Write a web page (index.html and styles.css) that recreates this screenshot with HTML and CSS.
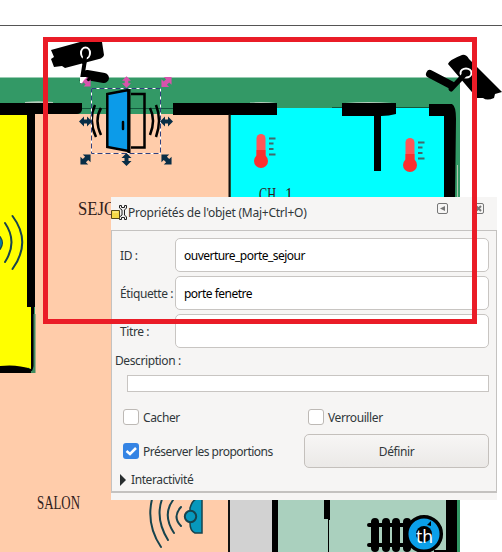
FILE: index.html
```
<!DOCTYPE html>
<html lang="fr">
<head>
<meta charset="utf-8">
<title>Propriétés de l'objet</title>
<link rel="stylesheet" href="styles.css">
</head>
<body>
<main class="workspace">
<svg class="plan" viewBox="0 0 502 552" width="502" height="552">
  <defs>
    <path id="arrow" d="M-6.5 0L-1.5-5V-2H1.5V-5L6.5 0L1.5 5V2H-1.5V5Z"/>
    <g id="thermo">
      <rect x="-4.5" y="-17" width="9" height="27" rx="4.5" fill="#ff5558"/>
      <path d="M-4.5-1H4.5V7H-4.5Z" fill="#fb302f"/>
      <circle cy="10" r="7" fill="#fb302f"/>
      <path d="M8-12.500H14.500M8-7.500H12.500M8-2H12.500M8 3.500H14.500" stroke="#42696b" stroke-width="2"/>
    </g>
  </defs>
  <path d="M0 25.500H502" stroke="#555"/>
  <path d="M0 77.500H460V552H0Z" fill="#339966"/>
  <path d="M0 115H28V373H0Z" fill="#ff0"/>
  <path d="M35 114H229V552H0V373H35Z" fill="#ffccaa"/>
  <path d="M231 108H444V198H231Z" fill="#0ff"/>
  <path d="M230 499H272V552H230Z" fill="#d2d2d2"/>
  <path d="M278 499H447V552H278Z" fill="#aad0be"/>
  <path d="M82 108.500H174M332 107.500H430" stroke="#12583c"/>
  <path d="M25 102Q38 100.500 53 102V103H25ZM250 102.500Q265 101.500 276 103V104H250ZM345 103Q368 101 392 103V104H345Z" fill="#b4cbbb"/>
  <path d="M0 103H82V110Q81 114 77 114H35V307H27V115H0ZM173 103H277V115H173Z"/>
  <path d="M342 103H396V114Q389 116 381 116V171H374V116H342Z"/>
  <path d="M429 104H452Q456 106 456 119L455 198H444V116H429Z"/>
  <path d="M229.500 114V198M229 499V552" fill="none" stroke="#111" stroke-width="2"/>
  <path d="M27 305H34V366L32 371H30V369Q18 366 0 367V373H31V307H27Z"/>
  <path d="M0 366Q17 364 31 369V373H0Z"/>
  <path d="M27 307H31V369L27 367Z" fill="#ff0"/>
  <path d="M34.500 314V372H31" fill="none" stroke="#438c61" stroke-width="2"/>
  <path d="M272 499H278V552H272ZM324 499H330V520H329V552H328V519H324ZM446 499H457V552H434V550H446Z"/>
  <path d="M457.500 165V198" stroke="#b1c7ae"/>
  <g fill="none" stroke="#17434d" stroke-width="2" stroke-linecap="round">
    <path d="M0 237Q4 243 0 249M5 223Q18 242 5 262M12.500 216Q32 242 12.500 269"/>
    <path d="M181 507Q172 517 181 526M173 500Q162 515 174 533M162 499Q155 519 168 540M152 499Q146 525 161 547"/>
  </g>
  <path d="M0 238Q4 242 0 248Z" fill="#087da0"/>
  <path d="M202 499V533H195Q190 531 190 523V508Q192 501 196 499Z" fill="#0798bd" stroke="#17434d" stroke-width="1.500"/>
  <circle cx="190.500" cy="516.500" r="5.700" fill="#0798bd" stroke="#17434d" stroke-width="2"/>
  <g class="room">
    <text x="78" y="215" textLength="38" lengthAdjust="spacingAndGlyphs">SEJO</text>
    <text x="37" y="509" textLength="43" lengthAdjust="spacingAndGlyphs">SALON</text>
    <text x="259" y="201" textLength="17" lengthAdjust="spacingAndGlyphs">CH</text>
    <text x="285" y="201" textLength="8" lengthAdjust="spacingAndGlyphs">1</text>
  </g>
  <use href="#thermo" x="261" y="151"/>
  <use href="#thermo" x="410" y="155"/>

  <g>
    <path d="M51 50L80 42H102L104 55Q103 58 99 59L65 68L62 66L54 67L51 59L54 57Z"/>
    <path d="M85 60L82 79H95" fill="none" stroke="#000" stroke-width="4"/>
    <path d="M87 75L104 78" stroke="#000" stroke-width="10" stroke-linecap="round"/>
    <ellipse cx="85.500" cy="53" rx="4.500" ry="5.500" fill="#000" stroke="#fff" stroke-width="2"/>
    <path d="M85.500 53L84 64" stroke="#000" stroke-width="4"/>
  </g>
  <g>
    <path d="M448 64Q449 60 462 55Q466 54 469 59L502 92L495 94L494 98Q487 101 483 98L477 98Z"/>
    <path d="M430 74L451 85" stroke="#000" stroke-width="8" stroke-linecap="round"/>
    <ellipse cx="466" cy="73" rx="5.500" ry="4.500" fill="#000" stroke="#fff" stroke-width="2"/>
    <path d="M466 73L451 89" stroke="#000" stroke-width="5" stroke-linecap="round"/>
  </g>

  <g fill="none" stroke="#000" stroke-width="2.500">
    <path d="M131 94H144.500V147.500H131"/>
    <path d="M95 105Q88 120 96 137M101 108Q94 120 101 135M156 105Q162 120 156 137M150 108Q156 120 150 135"/>
    <path d="M107.300 94L128.500 90V151L107.300 147Z" fill="#0c9be9"/>
    <path d="M129 89V153" stroke-width="3"/>
    <path d="M123 122V129" stroke-linecap="round"/>
  </g>
  <path d="M91.500 88.500H160.500V153.500H91.500Z" fill="none" stroke="#fff"/>
  <path d="M91.500 88.500H160.500V153.500H91.500Z" fill="none" stroke="#31407c" stroke-dasharray="5 3"/>
  <g fill="#d953ad">
    <use href="#arrow" transform="translate(86 82) rotate(45)"/>
    <use href="#arrow" transform="translate(126.500 82) rotate(90) scale(.9)"/>
    <use href="#arrow" transform="translate(166.500 82) rotate(-45) scale(1.100)"/>
  </g>
  <path d="M80 77H87L84 80L82 83H80Z" fill="#fff"/>
  <g fill="#082d46">
    <use href="#arrow" x="85.500" y="121.500"/>
    <use href="#arrow" x="166.500" y="121.500"/>
    <use href="#arrow" transform="translate(85.500 159.500) rotate(-45) scale(1.100)"/>
    <use href="#arrow" transform="translate(126.500 159.500) rotate(90)"/>
    <use href="#arrow" transform="translate(166.500 159.500) rotate(45) scale(1.100)"/>
  </g>

  <g stroke="#000" stroke-width="8" stroke-linecap="round">
    <path d="M375 522V548M386 522V548M396 522V548M407 522V548"/>
    <path d="M369 525H410M369 545H410" stroke-width="4"/>
  </g>
  <circle cx="424" cy="534" r="17.300" fill="#0b9fe9" stroke="#000" stroke-width="3.500"/>
  <circle cx="424" cy="534" r="8"/>
  <path d="M427 525L431 521V526Z"/>
  <text class="thermostat" x="416" y="543" textLength="17" lengthAdjust="spacingAndGlyphs">th</text>
</svg>

<section class="dialog">
  <header class="titlebar">
    <svg class="tool-icon" viewBox="0 0 17 17" width="17" height="17">
      <path d="M8.500 1.500V4L11 6V11L8.500 13V15.500H10.500V13.500H13.500V15.500H15.500V13L13.500 11V6L15.500 4V1.500H13.500V3.500H10.500V1.500Z" fill="#eee" stroke="#222"/>
      <path d="M.5 6.500H8.500V14.500H.5Z" fill="#f6d947" stroke="#554719"/>
      <path d="M2 8H7" stroke="#fff1a0"/>
    </svg>
    <h1>Propriétés de l'objet (Maj+Ctrl+O)</h1>
    <svg class="window-icons" viewBox="0 0 48 12" width="48" height="12">
      <rect x=".5" y=".5" width="10" height="10" rx="1.500" fill="none" stroke="#777"/>
      <path d="M8 3V8L3 5.500Z" fill="#777"/>
      <rect x="36.500" y=".5" width="10" height="10" rx="1.500" fill="none" stroke="#777"/>
      <path d="M39 3L44 8M44 3L39 8" stroke="#777" stroke-width="2"/>
    </svg>
  </header>
  <div class="panel">
    <div class="fields">
      <span class="label">ID :</span><div class="input">ouverture_porte_sejour</div>
      <span class="label">Étiquette :</span><div class="input">porte fenetre</div>
      <span class="label">Titre :</span><div class="input"></div>
    </div>
    <div class="description">Description :</div>
    <div class="textarea"></div>
    <div class="options">
      <div class="check"><i class="box"></i><span>Cacher</span></div>
      <div class="check second"><i class="box"></i><span>Verrouiller</span></div>
      <div class="check"><i class="box checked"><svg viewBox="0 0 16 16" width="16" height="16"><path d="M3.500 8L7 11L13 5" fill="none" stroke="#fff" stroke-width="2.500"/></svg></i><span class="tight">Préserver les proportions</span></div>
      <div class="button">Définir</div>
    </div>
    <div class="expander"><svg viewBox="0 0 6 12" width="6" height="12"><path d="M0 0L6 6L0 12Z" fill="#292e30"/></svg><span>Interactivité</span></div>
  </div>
</section>
<div class="highlight"></div>
</main>
</body>
</html>
```
FILE: styles.css
```
* { box-sizing: border-box; }
body { margin: 0; background: #fff; overflow: hidden; }
.workspace { position: relative; width: 502px; height: 552px; }
.plan { display: block; }
.room { font: 19.5px "Liberation Serif", serif; fill: #30201b; }
.thermostat { font: 18px "Noto Sans", sans-serif; fill: #fff; }
.dialog {
  position: absolute; left: 111px; top: 197px; width: 386px; height: 303px;
  background: #f6f5f4; color: #30373a;
  font: 12px/16px "Noto Sans", "Open Sans", sans-serif; letter-spacing: -.4px;
  white-space: nowrap;
}
.titlebar { display: flex; height: 33px; padding-top: 7px; }
.tool-icon { flex: none; }
.titlebar h1 { flex: 1; margin: 1px 0 0; font-size: 12px; font-weight: 400; letter-spacing: -.24px; }
.window-icons { flex: none; margin: -1px 12px 0 0; }
.panel { height: 263px; padding: 7px 7px 0 0; border: 1px solid #c4c2c0; border-bottom-width: 2px; }
.fields { display: grid; grid-template-columns: 56px 314px; grid-auto-rows: 34px; gap: 4px 0; padding-left: 7px; align-items: center; }
.label { padding: 1px 0 0 1px; }
.input { height: 34px; display: flex; align-items: center; padding: 1px 0 0 8px; border: 1px solid #c8c5c2; border-radius: 5px; background: #fff; color: #000; letter-spacing: -.52px; }
.description { margin: 5px 0 6px 3px; }
.textarea { height: 17px; margin-left: 15px; border: 1px solid #c8c5c2; background: #fff; }
.options { display: grid; grid-template-columns: 181px 185px; grid-template-rows: 34px 34px; margin: 8px 0 0 11px; align-items: center; }
.check { display: flex; align-items: center; gap: 4px; }
.check span { padding-top: 1px; }
.check .tight { letter-spacing: -.52px; }
.check.second { padding-left: 4px; }
.box { width: 16px; height: 16px; border: 1px solid #bdb9b5; border-radius: 3px; background: #fff; }
.box.checked { border: 0; background: #3584e4; }
.box svg { display: block; }
.button { height: 34px; display: flex; align-items: center; justify-content: center; padding-top: 1px; border: 1px solid #c4c0bc; border-radius: 5px; background: linear-gradient(#f7f6f5, #ebe9e7); }
.expander { display: flex; align-items: center; gap: 5px; margin: 4px 0 0 8px; }
.highlight { position: absolute; left: 43px; top: 37px; width: 434px; height: 287px; border: 5px solid #ea1c27; }
```
